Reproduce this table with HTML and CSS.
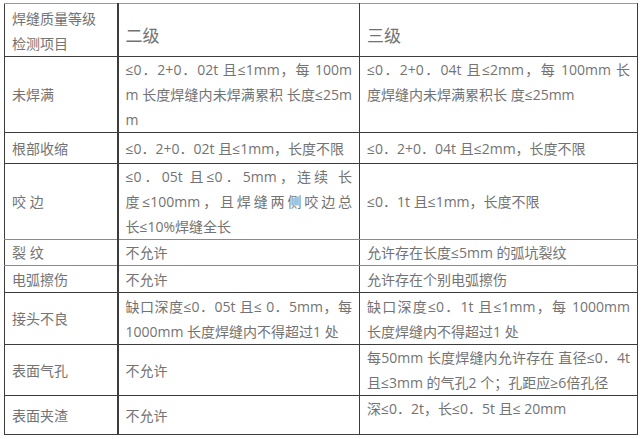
FILE: index.html
```html
<!DOCTYPE html>
<html lang="zh-CN">
<head>
<meta charset="utf-8">
<title>焊缝质量等级</title>
<link rel="stylesheet" href="styles.css">
</head>
<body>
<table class="grade">
  <colgroup>
    <col class="c1"><col class="c2"><col class="c3">
  </colgroup>
  <tr class="r-head">
    <td class="lab head-lab"><span class="ln">焊缝质量等级</span><span class="ln">检测项目</span></td>
    <td class="big">二级</td>
    <td class="big">三级</td>
  </tr>
  <tr class="r1">
    <td class="lab">未焊满</td>
    <td class="top"><span class="ln j">≤0．2+0．02t 且≤1mm，每 100m</span><span class="ln j">m 长度焊缝内未焊满累积 长度≤25m</span><span class="ln">m</span></td>
    <td class="top"><span class="ln j">≤0．2+0．04t 且≤2mm，每 100mm 长</span><span class="ln">度焊缝内未焊满累积长 度≤25mm</span></td>
  </tr>
  <tr class="r2">
    <td class="lab">根部收缩</td>
    <td>≤0．2+0．02t 且≤1mm，长度不限</td>
    <td>≤0．2+0．04t 且≤2mm，长度不限</td>
  </tr>
  <tr class="r3">
    <td class="lab">咬 边</td>
    <td><span class="ln j">≤0．05t 且≤0．5mm，连续 长</span><span class="ln j">度≤100mm，且焊缝两侧咬边总</span><span class="ln">长≤10%焊缝全长</span></td>
    <td>≤0．1t 且≤1mm，长度不限</td>
  </tr>
  <tr class="r4">
    <td class="lab">裂 纹</td>
    <td>不允许</td>
    <td>允许存在长度≤5mm 的弧坑裂纹</td>
  </tr>
  <tr class="r5">
    <td class="lab">电弧擦伤</td>
    <td>不允许</td>
    <td>允许存在个别电弧擦伤</td>
  </tr>
  <tr class="r6">
    <td class="lab">接头不良</td>
    <td><span class="ln j">缺口深度≤0．05t 且≤ 0．5mm，每</span><span class="ln">1000mm 长度焊缝内不得超过1 处</span></td>
    <td><span class="ln j">缺口深度≤0．1t 且≤1mm，每 1000mm</span><span class="ln">长度焊缝内不得超过1 处</span></td>
  </tr>
  <tr class="r7">
    <td class="lab">表面气孔</td>
    <td>不允许</td>
    <td class="top"><span class="ln j">每50mm 长度焊缝内允许存在 直径≤0．4t</span><span class="ln">且≤3mm 的气孔2 个；孔距应≥6倍孔径</span></td>
  </tr>
  <tr class="r8">
    <td class="lab">表面夹渣</td>
    <td>不允许</td>
    <td class="top">深≤0．2t，长≤0．5t 且≤ 20mm</td>
  </tr>
</table>
</body>
</html>
```
FILE: styles.css
```css
html, body {
  margin: 0;
  padding: 0;
  background: #ffffff;
}

body {
  padding: 3px 0 0 4px;
}

.grade {
  border-collapse: collapse;
  table-layout: fixed;
  width: 633px;
  font-family: "Open Sans", "Noto Sans CJK SC", sans-serif;
  font-size: 14px;
  line-height: 25px;
  color: #737373;
  border-top: 1px solid #9a9a9a;
}

.c1 { width: 113px; }
.c2 { width: 242px; }
.c3 { width: 278px; }

.grade td {
  border: 1px solid #3c3c3c;
  padding: 0 7px;
  vertical-align: middle;
  white-space: nowrap;
  overflow: hidden;
}

.grade tr:first-child td {
  border-top-color: #9a9a9a;
}

.grade td:first-child {
  border-right-width: 2px;
}

.grade td.top {
  vertical-align: top;
}

.grade td.head-lab {
  padding-top: 2px;
}

.grade td.big {
  font-size: 17px;
  padding-top: 10px;
}

.ln {
  display: block;
}

.ln.j {
  text-align: justify;
  text-align-last: justify;
}

.r-head { height: 52px; }
.r1 { height: 76px; }
.r2 { height: 31px; }
.r3 { height: 75px; }
.r4 { height: 26px; }
.r5 { height: 27px; }
.r6 { height: 52px; }
.r7 { height: 51px; }
.r8 { height: 39px; }

.r3 td, .r4 td {
  border-bottom-color: #8a8a8a;
}
```
